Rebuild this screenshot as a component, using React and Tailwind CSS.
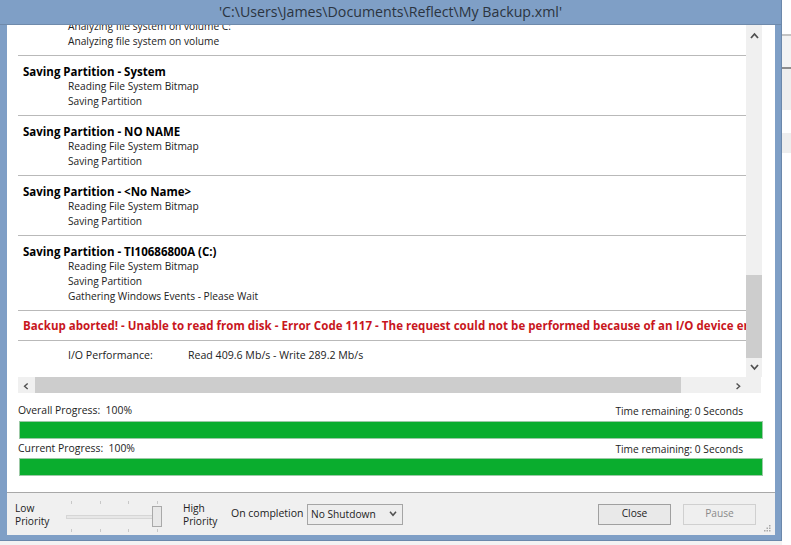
import React from "react";

const font = { fontFamily: '"Open Sans", "Noto Sans", sans-serif' };

function Section({ title, lines, first }) {
  return (
    <div className={"border-b border-[#b9b9b9] ml-[11px] pb-[6px] " + (first ? "mt-[-6px]" : "pt-[8px]")}>
      {title && <div className="h-[15px] leading-[15px] font-bold text-black pl-[5px] text-[11.5px]">{title}</div>}
      {lines.map((l, i) => (
        <div key={i} className="h-[15px] leading-[15px] pl-[50px] text-[#222]">{l}</div>
      ))}
    </div>
  );
}

function Chevron({ d, className }) {
  return (
    <svg viewBox="0 0 9 7" className={className} fill="none" stroke="#505050" strokeWidth="1.8">
      <path d={d} />
    </svg>
  );
}

function Progress({ label, value, compact }) {
  return (
    <div>
      <div className={"flex justify-between pl-[11px] pr-[32px] items-center text-[#222] " + (compact ? "h-[19px]" : "h-[20px]")}>
        <span className={"text-[10.4px] " + (compact ? "pt-[1px]" : "")}>{label}:&nbsp;&nbsp;{value}</span>
        <span className="pt-[2px]">Time remaining: 0 Seconds</span>
      </div>
      <div className="ml-[12px] w-[744px] h-[18px] bg-[#0aad2e] border border-[#9cc9a6]" />
    </div>
  );
}

function Ticks() {
  return (
    <div className="flex justify-between w-[87px] ml-[5px]">
      {[0, 1, 2, 3].map((i) => (
        <div key={i} className="w-px h-[3px] bg-[#c8c8c8]" />
      ))}
    </div>
  );
}

export default function App() {
  return (
    <div className="w-[791px] h-[545px] flex bg-[#f3f3f3] overflow-hidden text-[10.2px]" style={font}>
      <div className="w-[782px] h-[541px] bg-[#7f9fc6] border-r border-b border-[#6b88ab] flex flex-col shrink-0">
        <div className="h-[25px] shrink-0 border-b border-[#6f8aab] flex items-center justify-center text-[14.2px] text-[#2b3440] pb-[1px]">
          'C:\Users\James\Documents\Reflect\My Backup.xml'
        </div>
        <div className="mx-[7px] w-[768px] h-[510px] bg-white flex flex-col">
          <div className="h-[467px] flex flex-col">
            <div className="h-[352px] flex">
              <div className="w-[739px] overflow-hidden">
                <div className="w-[739px]">
                  <Section first lines={["Analyzing file system on volume C:", "Analyzing file system on volume"]} />
                  <Section title="Saving Partition - System" lines={["Reading File System Bitmap", "Saving Partition"]} />
                  <Section title="Saving Partition - NO NAME" lines={["Reading File System Bitmap", "Saving Partition"]} />
                  <Section title="Saving Partition - <No Name>" lines={["Reading File System Bitmap", "Saving Partition"]} />
                  <Section title="Saving Partition - TI10686800A (C:)" lines={["Reading File System Bitmap", "Saving Partition", "Gathering Windows Events - Please Wait"]} />
                  <div className="ml-[11px] h-[30px] border-b border-[#b9b9b9] flex items-center pl-[5px] font-bold text-[#c8161d] text-[11.5px] tracking-[0.04px] whitespace-nowrap overflow-hidden">
                    Backup aborted! - Unable to read from disk - Error Code 1117 - The request could not be performed because of an I/O device error
                  </div>
                  <div className="ml-[11px] h-[29px] flex items-center pl-[50px] text-[#222] text-[10.6px]">
                    <span className="w-[120px]">I/O Performance:</span>
                    <span>Read 409.6 Mb/s - Write 289.2 Mb/s</span>
                  </div>
                </div>
              </div>
              <div className="w-[16px] h-[352px] bg-[#f0f0f0] flex flex-col">
                <div className="h-[20px] flex items-center justify-center shrink-0"><Chevron d="M1 6 L4.5 2 L8 6" className="w-[9px] h-[7px]" /></div>
                <div className="h-[230px] shrink-0" />
                <div className="h-[83px] bg-[#cdcdcd] shrink-0" />
                <div className="flex-1 flex items-center justify-center"><Chevron d="M1 1 L4.5 5 L8 1" className="w-[9px] h-[7px]" /></div>
              </div>
            </div>
            <div className="ml-[11px] w-[743px] h-[16px] bg-[#f0f0f0] flex shrink-0">
              <div className="w-[17px] flex items-center justify-center"><Chevron d="M6 1 L2 4.5 L6 8" className="w-[7px] h-[9px]" /></div>
              <div className="w-[646px] bg-[#cdcdcd]" />
              <div className="flex-1 flex items-center justify-center pl-[34px]"><Chevron d="M2 1 L6 4.5 L2 8" className="w-[7px] h-[9px]" /></div>
            </div>
            <div className="pt-[8px]">
              <Progress label="Overall Progress" value="100%" />
              <Progress label="Current Progress" value="100%" compact />
            </div>
          </div>
          <div className="h-[43px] bg-[#f0f0f0] border-t border-[#a8a8a8] flex items-center text-[#222] relative">
            <div className="w-[59px] pl-[8px] pt-[2px] leading-[13px]">Low<br />Priority</div>
            <div className="w-[117px] flex flex-col relative h-[31px] justify-between self-start mt-[8px]">
              <Ticks />
              <div className="w-[96px] h-[4px] bg-[#e7e7e7] border border-[#d6d6d6]" />
              <Ticks />
              <div className="absolute left-[86px] top-[5px] w-[10px] h-[21px] bg-[#e8e8e8] border border-[#a9a9a9]" />
            </div>
            <div className="w-[48px] pt-[2px] leading-[13px]">High<br />Priority</div>
            <div className="w-[76px] whitespace-nowrap text-[10.5px]">On completion</div>
            <div className="w-[96px] h-[21px] border border-[#a5a5a5] bg-[#ededed] flex items-center justify-between pl-[3px] pr-[5px]">
              <span className="pt-[2px]">No Shutdown</span>
              <Chevron d="M1 1 L4.5 5 L8 1" className="w-[8px] h-[6px]" />
            </div>
            <div className="ml-[195px] w-[73px] h-[21px] border border-[#a0a0a0] bg-[#e9e9e9] flex items-center justify-center">Close</div>
            <div className="ml-[12px] w-[73px] h-[21px] border border-[#d0d0d0] bg-[#efefef] flex items-center justify-center text-[#8a8a8a]">Pause</div>
            <svg viewBox="0 0 7 7" className="absolute right-[4px] bottom-[3px] w-[7px] h-[7px]" fill="#a8a8a8">
              <rect x="5" y="0" width="1.5" height="1.5" />
              <rect x="2.5" y="2.5" width="1.5" height="1.5" />
              <rect x="5" y="2.5" width="1.5" height="1.5" />
              <rect x="0" y="5" width="1.5" height="1.5" />
              <rect x="2.5" y="5" width="1.5" height="1.5" />
              <rect x="5" y="5" width="1.5" height="1.5" />
            </svg>
          </div>
        </div>
      </div>
      <div className="w-[9px] h-[545px] flex flex-col">
        <div className="h-[34px] bg-white" />
        <div className="h-[2px] bg-[#c4c4c4]" />
        <div className="h-[31px]" />
        <div className="h-[2px] bg-[#8d8d8d]" />
        <div className="h-[41px] bg-[#eeeeee]" />
        <div className="h-[23px] bg-white" />
        <div className="h-[20px] bg-[#eeeeee]" />
        <div className="flex-1 bg-white" />
      </div>
    </div>
  );
}
